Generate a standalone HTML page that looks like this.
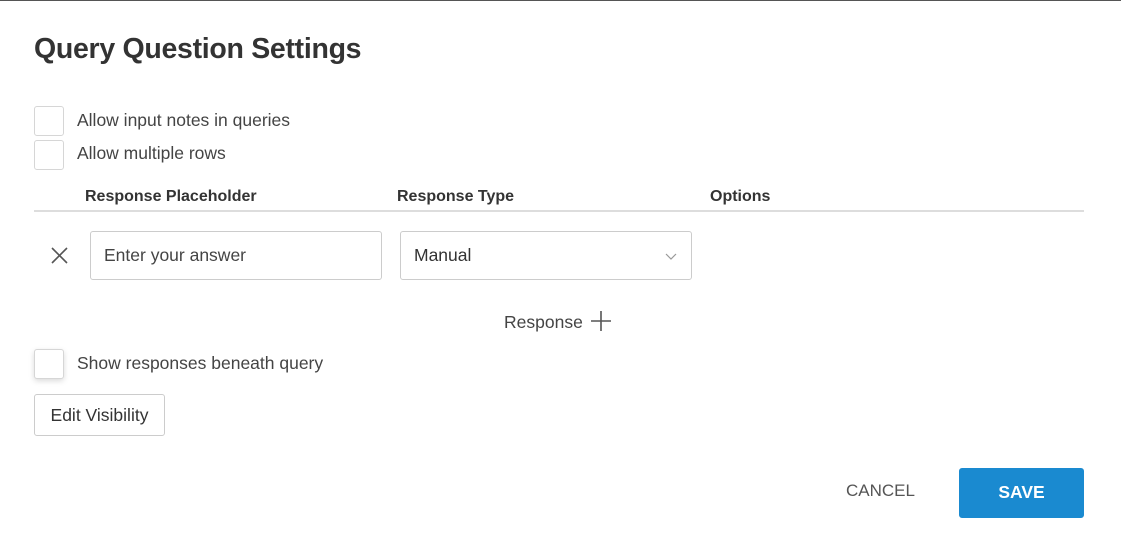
<!DOCTYPE html>
<html><head><style>
body{margin:0;width:1121px;height:545px;background:#fff;font-family:"Liberation Sans",sans-serif;color:#333;position:relative;overflow:hidden}
.a{position:absolute;white-space:nowrap}
.top{position:absolute;left:0;top:0;width:1121px;height:1px;background:#555}
h1{position:absolute;left:34px;top:33px;margin:0;font-size:28.5px;font-weight:bold;color:#333;letter-spacing:-0.3px}
.cb{position:absolute;width:28px;height:28px;border:1px solid #d6d6d6;border-radius:3px;background:#fff}
.lbl{font-size:17.5px;color:#444}
.hd{font-size:16px;font-weight:bold;color:#333}
.inp{position:absolute;height:49px;border:1px solid #ccc;border-radius:3px;box-sizing:border-box;font-size:17.5px;color:#444;padding:0 13px;line-height:47px}
.btn{position:absolute;box-sizing:border-box;border:1px solid #ccc;border-radius:3px;font-size:17.5px;color:#333;text-align:center}
</style></head><body>
<div class="top"></div>
<h1>Query Question Settings</h1>
<div class="cb" style="left:34px;top:106px"></div>
<div class="a lbl" style="left:77px;top:110px">Allow input notes in queries</div>
<div class="cb" style="left:34px;top:140px"></div>
<div class="a lbl" style="left:77px;top:143px">Allow multiple rows</div>
<div class="a hd" style="left:85px;top:188px">Response Placeholder</div>
<div class="a hd" style="left:397px;top:188px">Response Type</div>
<div class="a hd" style="left:710px;top:188px">Options</div>
<div class="a" style="left:34px;top:210px;width:1050px;height:2px;background:#ddd"></div>
<svg class="a" style="left:51px;top:247px" width="17" height="17" viewBox="0 0 17 17"><path d="M1 1L16 16M16 1L1 16" stroke="#555" stroke-width="1.6"/></svg>
<div class="inp" style="left:90px;top:231px;width:292px">Enter your answer</div>
<div class="inp" style="left:400px;top:231px;width:292px;color:#333">Manual</div>
<svg class="a" style="left:665px;top:253px" width="12" height="8" viewBox="0 0 12 8"><path d="M1 1L6 6L11 1" stroke="#999" stroke-width="1.2" fill="none"/></svg>
<div class="a lbl" style="left:504px;top:312px">Response</div>
<svg class="a" style="left:591px;top:311px" width="20" height="20" viewBox="0 0 20 20"><path d="M10 0V20M0 10H20" stroke="#555" stroke-width="1.6"/></svg>
<div class="cb" style="left:34px;top:349px;box-shadow:0 2px 6px rgba(0,0,0,0.15)"></div>
<div class="a lbl" style="left:77px;top:353px">Show responses beneath query</div>
<div class="btn" style="left:34px;top:394px;width:131px;height:42px;line-height:40px">Edit Visibility</div>
<div class="a" style="left:846px;top:481px;font-size:17px;color:#555">CANCEL</div>
<div class="btn" style="left:959px;top:468px;width:125px;height:50px;line-height:46px;background:#1a8ad0;border-color:#1a8ad0;color:#fff;font-weight:bold">SAVE</div>
</body></html>
